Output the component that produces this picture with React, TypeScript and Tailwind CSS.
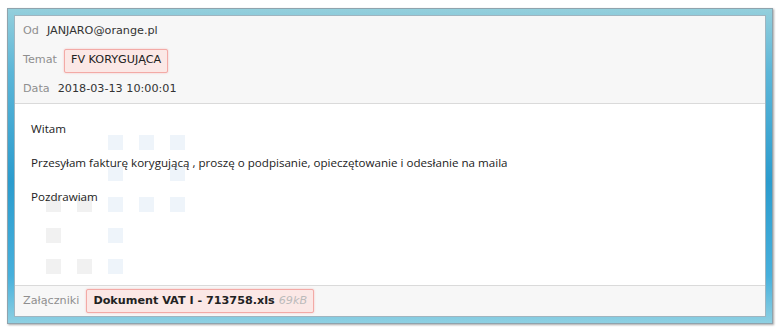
import React from "react";

const blue = [
  [1, 3], [1, 4], [1, 5],
  [2, 3], [2, 5],
  [3, 3], [3, 4], [3, 5],
  [4, 3],
  [5, 3],
];
const gray = [
  [3, 1], [3, 2],
  [4, 1],
  [5, 1], [5, 2],
];

export default function App() {
  return (
    <div className="w-[784px] h-[335px] bg-white pt-[8px] pl-[7px]" style={{ fontFamily: '"DejaVu Sans", Verdana, sans-serif' }}>
      <div
        className="w-[766px] h-[316px] p-[6px] border border-[#8fa3ad] shadow-[1px_1px_2px_rgba(0,0,0,0.35)]"
        style={{ background: "linear-gradient(to bottom, #94cfdc 0%, #5cb6d8 20%, #2b9cce 55%, #47b0dc 85%, #8ed0e2 100%)" }}
      >
        <div className="h-full flex flex-col bg-white border border-[#9fb5c0]">
          <div className="h-[88px] bg-[#f7f7f7] border-b border-[#dadada] pt-[1px] pl-[8px] text-[11.2px]">
            <div className="h-[29px] flex items-center">
              <span className="text-[#8f8f8f] mr-[8px]">Od</span>
              <span className="text-[#333]">JANJARO@orange.pl</span>
            </div>
            <div className="h-[29px] flex items-center">
              <span className="text-[#8f8f8f] mr-[7px]">Temat</span>
              <span className="h-[24px] px-[6px] flex items-center bg-[#fbe8e6] border border-[#f3aaa6] rounded-[2px] text-[#222] shadow-[0_0_2px_rgba(240,150,150,0.6)]">FV KORYGUJĄCA</span>
            </div>
            <div className="h-[29px] flex items-center">
              <span className="text-[#8f8f8f] mr-[8px]">Data</span>
              <span className="text-[#333]">2018-03-13 10:00:01</span>
            </div>
          </div>
          <div className="relative flex-1 bg-white">
            {blue.map(([r, c], i) => (
              <div key={"b" + i} className="absolute w-[15px] h-[15px] bg-[#eef4fa]" style={{ top: r * 31, left: 31 + (c - 1) * 31 }} />
            ))}
            {gray.map(([r, c], i) => (
              <div key={"g" + i} className="absolute w-[15px] h-[15px] bg-[#f1f1f1]" style={{ top: r * 31, left: 31 + (c - 1) * 31 }} />
            ))}
            <div className="relative pl-[16px] pt-[16px] text-[11.6px] leading-[17px] text-[#222]" style={{ fontFamily: '"Open Sans", "Noto Sans", sans-serif' }}>
              <p className="mb-[17px]">Witam</p>
              <p className="mb-[17px]">Przesyłam fakturę korygującą , proszę o podpisanie, opieczętowanie i odesłanie na maila</p>
              <p>Pozdrawiam</p>
            </div>
          </div>
          <div className="h-[31px] bg-[#f7f7f7] border-t border-[#dadada] pl-[8px] flex items-center text-[11.2px]">
            <span className="text-[#8f8f8f] mr-[7px]">Załączniki</span>
            <span className="h-[24px] px-[6px] flex items-center bg-[#fbe8e6] border border-[#f3aaa6] rounded-[2px] shadow-[0_0_2px_rgba(240,150,150,0.6)]">
              <span className="font-bold text-[#222]">Dokument VAT I - 713758.xls</span>
              <span className="italic text-[#bbbbbb] ml-[4px]">69kB</span>
            </span>
          </div>
        </div>
      </div>
    </div>
  );
}
